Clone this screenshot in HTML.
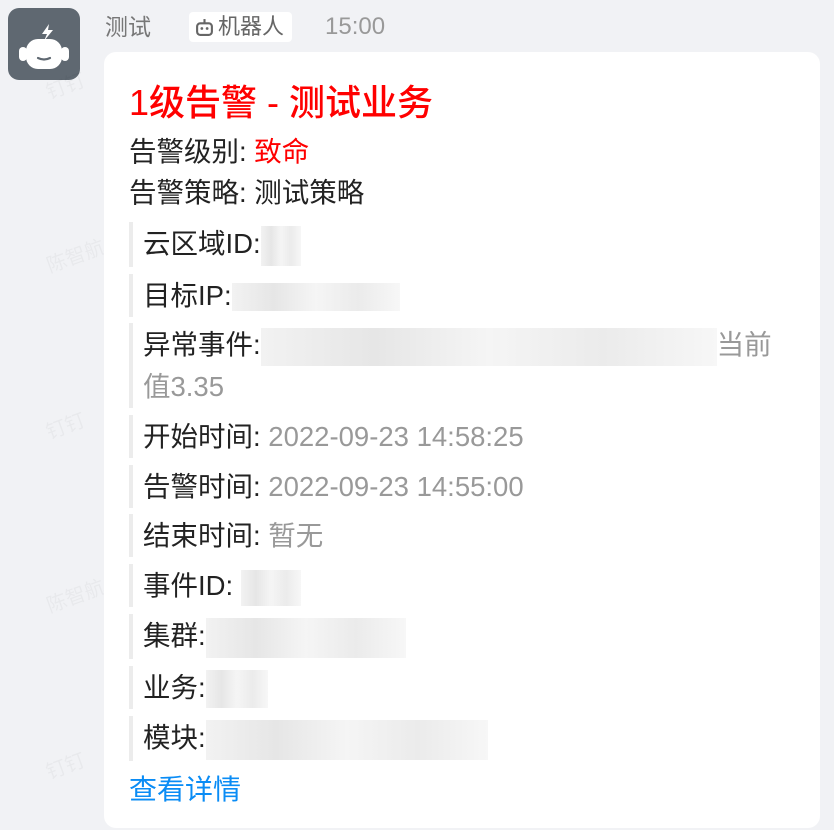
<!DOCTYPE html>
<html><head><meta charset="utf-8"><style>
*{margin:0;padding:0;box-sizing:border-box}
body{width:834px;height:830px;background:#f1f2f5;font-family:"Liberation Sans","Noto Sans CJK SC",sans-serif;position:relative;overflow:hidden}
.av{position:absolute;left:8px;top:8px;width:72px;height:72px;border-radius:11px;background:#5f6871}
.name{position:absolute;left:105px;top:12px;font-size:23px;color:#777;line-height:30px}
.tag{position:absolute;left:189px;top:12px;width:103px;height:30px;background:#fff;border-radius:4px;font-size:22px;color:#666;line-height:30px;padding-left:29px}
.time{position:absolute;left:325px;top:12px;font-size:24px;color:#999;line-height:30px}
.card{position:absolute;left:104px;top:52px;width:716px;height:776px;background:#fff;border-radius:12px;padding:28px 25px}
.t{color:#f00;font-size:36px;line-height:46px;font-weight:500}
.l{font-size:27.5px;line-height:41px;color:#222}
.r{border-left:4px solid #ececec;padding:1px 0 1px 10px;margin-bottom:6.8px;font-size:27.5px;line-height:41px;color:#222}
.g{color:#999}
.b{display:inline-block;vertical-align:middle;background:linear-gradient(90deg,#f2f2f2,#e6e6e6,#f5f5f5,#ebebeb,#f7f7f7);}
a{color:#0a8cf5;text-decoration:none;font-size:28px;line-height:44px}
.wm{position:absolute;color:rgba(0,0,0,.035);font-size:20px;transform:rotate(-20deg)}
</style></head><body>
<div class="av"><svg width="72" height="72" viewBox="0 0 72 72"><path d="M41 16l-7 10h5l-3 7 9-11h-5z" fill="#fff"/><rect x="18" y="31" width="36" height="30" rx="12" fill="#fff"/><rect x="11" y="39" width="8" height="14" rx="4" fill="#fff"/><rect x="53" y="39" width="8" height="14" rx="4" fill="#fff"/><path d="M30 50q6 3 12 0" stroke="#5f6871" stroke-width="2.2" fill="none" stroke-linecap="round"/></svg></div>
<div class="name">测试</div>
<div class="tag"><svg style="position:absolute;left:6px;top:6px" width="19" height="19" viewBox="0 0 18 18"><path d="M9 1v4" stroke="#666" stroke-width="2"/><rect x="2" y="5" width="14" height="11" rx="3" fill="none" stroke="#666" stroke-width="2"/><circle cx="6.5" cy="10" r="1.3" fill="#666"/><circle cx="11.5" cy="10" r="1.3" fill="#666"/></svg>机器人</div>
<div class="time">15:00</div>
<div class="wm" style="left:45px;top:70px">钉钉</div>
<div class="wm" style="left:45px;top:240px">陈智航</div>
<div class="wm" style="left:45px;top:410px">钉钉</div>
<div class="wm" style="left:45px;top:580px">陈智航</div>
<div class="wm" style="left:45px;top:750px">钉钉</div>
<div class="card">
<div class="t">1级告警 - 测试业务</div>
<div class="l" style="margin-top:5px">告警级别: <span style="color:#f00">致命</span></div>
<div class="l" style="margin-bottom:9px">告警策略: 测试策略</div>
<div class="r">云区域ID:<span class="b" style="width:40px;height:40px"></span></div>
<div class="r">目标IP:<span class="b" style="width:168px;height:28px"></span></div>
<div class="r">异常事件:<span class="b" style="width:456px;height:38px"></span><span class="g">当前<br>值3.35</span></div>
<div class="r">开始时间: <span class="g">2022-09-23 14:58:25</span></div>
<div class="r">告警时间: <span class="g">2022-09-23 14:55:00</span></div>
<div class="r">结束时间: <span class="g">暂无</span></div>
<div class="r">事件ID: <span class="b" style="width:60px;height:36px"></span></div>
<div class="r">集群:<span class="b" style="width:200px;height:40px"></span></div>
<div class="r">业务:<span class="b" style="width:62px;height:38px"></span></div>
<div class="r">模块:<span class="b" style="width:282px;height:40px"></span></div>
<a>查看详情</a>
</div>
</body></html>
